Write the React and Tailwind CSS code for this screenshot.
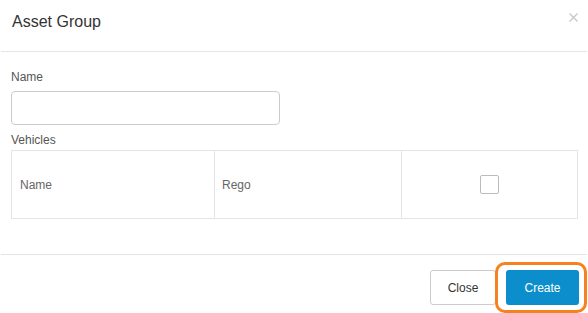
export default function App() {
  return (
    <div className="w-[588px] h-[313px] bg-white overflow-hidden font-['Liberation_Sans',_Arial,_sans-serif]">
      <div className="relative flex items-start justify-between h-[52px] pl-[11px] pr-[11px] pt-[12px] border-b border-[#e5e5e5] mx-[1px]">
        <h1 className="text-[16px] leading-[20px] text-[#333]">Asset Group</h1>
        <button className="text-[#c8c8c8] mt-[1px] mr-[-2px]">
          <svg width="9" height="9" viewBox="0 0 9 9" fill="none" stroke="currentColor" strokeWidth="1.4">
            <path d="M0.5 0.5L8.5 8.5M8.5 0.5L0.5 8.5" />
          </svg>
        </button>
      </div>
      <div className="px-[11px] pt-[17px]">
        <label className="block text-[12px] leading-[16px] text-[#555]">Name</label>
        <input className="mt-[6px] block w-[269px] h-[34px] border border-[#ccc] rounded-[4px] outline-none" />
        <label className="block mt-[7px] text-[12px] leading-[16px] text-[#555]">Vehicles</label>
        <div className="mt-[2px] w-[567px] h-[69px] border border-[#e5e5e5] grid grid-cols-[203px_187px_1fr] text-[12px] text-[#666]">
          <div className="flex items-center pl-[8px] border-r border-[#e5e5e5]">Name</div>
          <div className="flex items-center pl-[7px] border-r border-[#e5e5e5]">Rego</div>
          <div className="flex items-center justify-center">
            <div className="w-[19px] h-[19px] border border-[#bbb] rounded-[2px] bg-white" />
          </div>
        </div>
      </div>
      <div className="mt-[35px] mx-[1px] border-t border-[#e5e5e5] flex justify-end items-start pt-[7px] pr-0">
        <button className="mt-[8px] w-[66px] h-[35px] border border-[#ccc] rounded-[3px] bg-white text-[12px] text-[#333]">Close</button>
        <div className="relative ml-[-1px] pt-[5px] pl-[8px] pr-[5px] pb-[5px] border-[3px] border-[#f5821f] rounded-[10px]">
          <button className="block w-[73px] h-[35px] rounded-[3px] bg-[#0b8ecb] text-[12px] text-white">Create</button>
        </div>
      </div>
    </div>
  );
}
